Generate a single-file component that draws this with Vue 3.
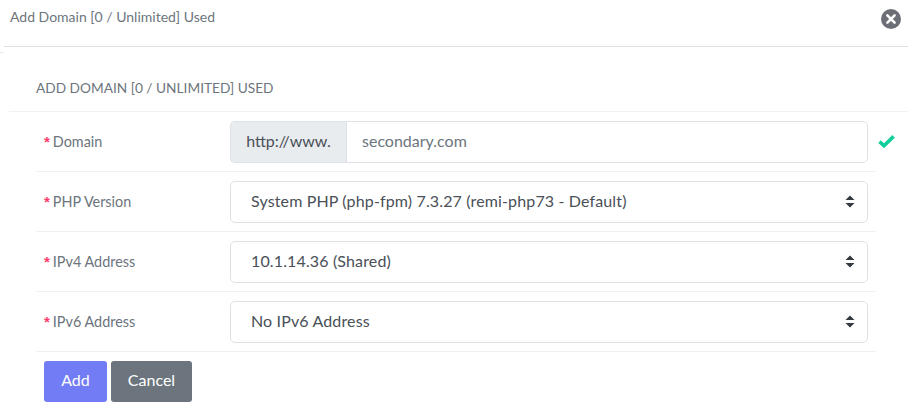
<template>
  <div class="modal">
    <div class="modal-header">
      <span class="modal-title">Add Domain [0 / Unlimited] Used</span>
      <button class="close-btn" type="button" aria-label="Close">
        <svg width="20" height="20" viewBox="0 0 20 20">
          <circle cx="10" cy="10" r="10" fill="#6c6f75" />
          <path d="M6.4 6.4 13.6 13.6M13.6 6.4 6.4 13.6" stroke="#fff" stroke-width="2.6" stroke-linecap="round" />
        </svg>
      </button>
    </div>
    <div class="header-tick"></div>

    <div class="modal-body">
      <h4 class="form-title">ADD DOMAIN [0 / UNLIMITED] USED</h4>

      <form class="form" @submit.prevent>
        <div class="form-row">
          <label class="row-label"><span class="req">*</span>Domain</label>
          <div class="input-group">
            <span class="prepend">http://www.</span>
            <input class="text-input" type="text" placeholder="secondary.com" />
          </div>
          <svg class="valid-icon" width="17" height="14" viewBox="0 0 17 14">
            <path d="M1.5 6.6 6 10.8 15.6 1.4" fill="none" stroke="#10cf9b" stroke-width="3.6" />
          </svg>
        </div>

        <div v-for="row in selectRows" :key="row.label" class="form-row">
          <label class="row-label"><span class="req">*</span>{{ row.label }}</label>
          <div class="select-wrap">
            <select class="select-input">
              <option>{{ row.value }}</option>
            </select>
            <svg class="select-arrows" width="10" height="13" viewBox="0 0 10 13">
              <path d="M5 .5 9.5 5H.5zM5 12.5.5 8h9z" fill="#343a40" />
            </svg>
          </div>
        </div>

        <div class="actions">
          <button class="btn btn-add" type="submit">Add</button>
          <button class="btn btn-cancel" type="button">Cancel</button>
        </div>
      </form>
    </div>
  </div>
</template>

<script setup>
const selectRows = [
  { label: "PHP Version", value: "System PHP (php-fpm) 7.3.27 (remi-php73 - Default)" },
  { label: "IPv4 Address", value: "10.1.14.36 (Shared)" },
  { label: "IPv6 Address", value: "No IPv6 Address" },
];
</script>

<style>
body {
  background: #fff;
}
</style>

<style scoped>
.modal {
  width: 913px;
  height: 408px;
  box-sizing: border-box;
  overflow: hidden;
  background: #fff;
  font-family: "Lato", "Noto Sans", sans-serif;
  color: #6c757d;
}

.modal-header {
  height: 46px;
  margin: 0 5px 0 4px;
  padding: 0 7px 0 6px;
  display: flex;
  align-items: flex-start;
  justify-content: space-between;
  border-bottom: 1px solid #e1e0e6;
}

.modal-title {
  margin-top: 8px;
  font-size: 14px;
  line-height: 17px;
}

.close-btn {
  margin-top: 9px;
  padding: 0;
  border: 0;
  background: none;
  line-height: 0;
}

.header-tick {
  width: 4px;
  height: 1px;
  margin-top: 5px;
  background: #e9ecef;
}

.form-title {
  margin: 0 5px 0 9px;
  padding: 26px 0 14px 27px;
  font-size: 13.7px;
  line-height: 18px;
  font-weight: 400;
  border-bottom: 1px solid #f1f1f3;
}

.form {
  width: 840px;
  margin-left: 36px;
}

.form-row {
  height: 60px;
  box-sizing: border-box;
  display: flex;
  align-items: center;
  border-bottom: 1px solid #eff0f2;
}

.row-label {
  width: 194px;
  padding: 0 0 1px 8px;
  box-sizing: border-box;
  font-size: 14.4px;
  flex-shrink: 0;
}

.req {
  font-family: "Liberation Sans", sans-serif;
  font-size: 15px;
  font-weight: 700;
  color: #ff3d71;
  margin-right: 3px;
}

.input-group,
.select-wrap {
  width: 638px;
  height: 42px;
  box-sizing: border-box;
  display: flex;
  flex-shrink: 0;
}

.prepend {
  width: 116px;
  padding-bottom: 2px;
  box-sizing: border-box;
  display: flex;
  align-items: center;
  justify-content: center;
  font-size: 16px;
  color: #495057;
  background: #e9ecef;
  border: 1px solid #dee2e6;
  border-right: 0;
  border-radius: 5px 0 0 5px;
}

.text-input {
  flex: 1;
  min-width: 0;
  padding: 0 15px 2px;
  box-sizing: border-box;
  font: inherit;
  font-size: 16px;
  border: 1px solid #dee2e6;
  border-radius: 0 5px 5px 0;
  outline: none;
}

.text-input::placeholder {
  color: #6c757d;
  opacity: 1;
}

.valid-icon {
  margin-left: 10px;
  flex-shrink: 0;
}

.select-wrap {
  position: relative;
}

.select-input {
  width: 100%;
  height: 100%;
  padding: 0 30px 2px 20px;
  box-sizing: border-box;
  appearance: none;
  font: inherit;
  font-size: 16px;
  letter-spacing: 0.14px;
  color: #495057;
  background: #fff;
  border: 1px solid #dee2e6;
  border-radius: 5px;
  outline: none;
}

.select-arrows {
  position: absolute;
  right: 13px;
  top: 14px;
  pointer-events: none;
}

.actions {
  display: flex;
  gap: 4px;
  margin-top: 9px;
  padding-left: 8px;
}

.btn {
  height: 41px;
  padding: 0 0 5px;
  border: 0;
  border-radius: 3px;
  font: inherit;
  font-size: 16px;
  color: #fff;
}

.btn-add {
  width: 63px;
  background: #727cf5;
}

.btn-cancel {
  width: 81px;
  background: #6c757d;
}
</style>
